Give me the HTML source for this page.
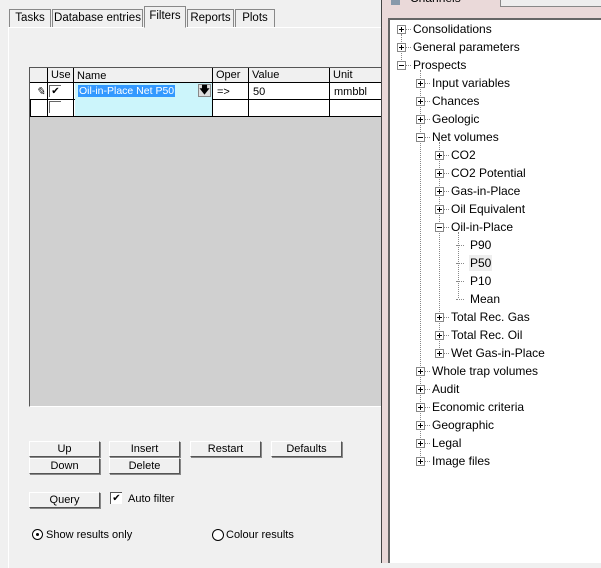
<!DOCTYPE html><html><head><style>
body{margin:0;width:601px;height:563px;overflow:hidden;background:#f0f0f0;font-family:"Liberation Sans",sans-serif;font-size:11px;color:#000;position:relative}
.a{position:absolute;white-space:nowrap}
.tab{position:absolute;top:9px;height:18px;border:1px solid #888;border-bottom:none;background:#f0f0f0;line-height:17px;font-size:11.5px;box-sizing:border-box;white-space:nowrap;overflow:hidden;text-align:center}
.btn{position:absolute;height:16px;border:1px solid;border-color:#fff #555 #555 #fff;background:#f0f0f0;text-align:center;line-height:15px;box-sizing:border-box;font-size:11px;box-shadow:1px 1px 0 #888}
.c{position:absolute;top:0;height:100%;border-right:1px solid #000;box-sizing:border-box;padding-left:3px}
.row{position:absolute;left:0;width:352px;border-bottom:1px solid #000;box-sizing:border-box}
.t{position:absolute;font-size:12px;line-height:16px;color:#000;white-space:nowrap}
.pb{position:absolute;width:9px;height:9px;border:1px solid #888;box-sizing:border-box;background:#fff}
.pb:before{content:"";position:absolute;left:1px;top:3px;width:5px;height:1px;background:#000}
.pb.p:after{content:"";position:absolute;left:3px;top:1px;width:1px;height:5px;background:#000}
.vl{position:absolute;border-left:1px dotted #888;width:0}
.hl{position:absolute;border-top:1px dotted #888;height:0}
</style></head><body>
<div class="a" style="left:8px;top:27px;width:380px;height:540px;border-left:1px solid #fff;border-top:1px solid #fff"></div>
<div class="tab" style="left:9px;width:42px">Tasks</div>
<div class="tab" style="left:52px;width:91px">Database entries</div>
<div class="tab" style="left:144px;top:6px;height:22px;width:42px;border-bottom:1px solid #f0f0f0;line-height:19px">Filters</div>
<div class="tab" style="left:187px;width:47px">Reports</div>
<div class="tab" style="left:235px;width:40px">Plots</div>
<div class="a" style="left:29px;top:67px;width:352px;height:338px;background:#d0d0d0;border-left:1px solid #555;border-top:1px solid #555;border-bottom:1px solid #fff"></div>
<div class="a" style="left:30px;top:68px;width:352px;height:48px;background:#fff">
 <div class="row" style="top:0;height:15px;background:#f0f0f0"></div>
 <div class="row" style="top:15px;height:17px"></div>
 <div class="row" style="top:32px;height:17px"></div>
 <div class="c" style="left:0;width:18px"></div>
 <div class="c" style="left:18px;width:26px;line-height:14px">Use</div>
 <div class="a" style="left:45px;top:15px;width:137px;height:33px;background:#ccf5fb"></div>
 <div class="c" style="left:44px;width:139px;line-height:16px">Name</div>
 <div class="c" style="left:183px;width:36px;line-height:14px">Oper</div>
 <div class="c" style="left:219px;width:81px;line-height:14px">Value</div>
 <div class="c" style="left:300px;width:52px;line-height:14px">Unit</div>
 <div class="a" style="left:48px;top:17px;width:96px;height:12px;background:#3399ff;color:#fff;line-height:12px;padding-left:1px;overflow:hidden;font-size:10.5px">Oil-in-Place Net P50</div>
 <div class="a" style="left:168px;top:16px;width:13px;height:13px;background:#ddd;border:1px solid #888;box-sizing:border-box;font-size:10px;line-height:11px;text-align:center;font-weight:bold">&#x1F847;</div>
 <div class="a" style="left:187px;top:18px;line-height:12px">=&gt;</div>
 <div class="a" style="left:223px;top:18px;line-height:12px">50</div>
 <div class="a" style="left:304px;top:18px;line-height:12px">mmbbl</div>
 <div class="a" style="left:6px;top:17px;font-size:11px;font-style:italic">&#x270E;</div>
 <div class="a" style="left:19px;top:17px;width:12px;height:12px;border-top:1px solid #666;border-left:1px solid #666;box-sizing:border-box;font-size:10px;line-height:11px;text-align:center">&#10004;</div>
 <div class="a" style="left:19px;top:33px;width:12px;height:12px;border-top:1px solid #666;border-left:1px solid #666;box-sizing:border-box"></div>
 <div class="a" style="left:0;top:32px;width:18px;height:17px;border:1px solid #000;box-sizing:border-box;border-top:none"></div>
</div>
<div class="btn" style="left:29px;top:441px;width:71px">Up</div>
<div class="btn" style="left:109px;top:441px;width:71px">Insert</div>
<div class="btn" style="left:190px;top:441px;width:71px">Restart</div>
<div class="btn" style="left:271px;top:441px;width:71px">Defaults</div>
<div class="btn" style="left:29px;top:458px;width:71px">Down</div>
<div class="btn" style="left:109px;top:458px;width:71px">Delete</div>
<div class="btn" style="left:29px;top:492px;width:71px">Query</div>
<div class="a" style="left:110px;top:492px;width:12px;height:12px;background:#fff;border-top:1px solid #555;border-left:1px solid #555;box-sizing:border-box;font-size:10px;line-height:11px;text-align:center">&#10004;</div>
<div class="a" style="left:128px;top:493px">Auto filter</div>
<div class="a" style="left:32px;top:529px;width:11px;height:11px;border-radius:50%;border:1px solid #000;background:#fff;box-sizing:border-box"><div class="a" style="left:3px;top:3px;width:3px;height:3px;background:#000;border-radius:50%"></div></div>
<div class="a" style="left:46px;top:529px">Show results only</div>
<div class="a" style="left:212px;top:529px;width:12px;height:12px;border-radius:50%;border:1px solid #000;background:#fff;box-sizing:border-box"></div>
<div class="a" style="left:226px;top:529px">Colour results</div>
<div class="a" style="left:381px;top:0;width:220px;height:563px;background:#ead9d9"></div>
<div class="a" style="left:381px;top:0;width:1px;height:563px;background:#444"></div>
<div class="a" style="left:388px;top:18px;width:2px;height:545px;background:#666"></div>
<div class="a" style="left:390px;top:18px;width:211px;height:2px;background:#666"></div>
<div class="a" style="left:390px;top:20px;width:211px;height:543px;background:#fff"></div>
<div class="a" style="left:391px;top:0;width:9px;height:5px;background:#8899aa"></div>
<div class="a" style="left:410px;top:-9px;font-size:12px">Channels</div>
<div class="a" style="left:500px;top:0;width:100px;height:6px;border:1px solid #888;border-top:none;background:#eee"></div>
<div class="vl" style="left:401px;top:34px;height:30px"></div>
<div class="vl" style="left:420px;top:70px;height:392px"></div>
<div class="vl" style="left:439px;top:142px;height:212px"></div>
<div class="vl" style="left:458px;top:232px;height:66px"></div>
<div id="tree"></div>
<script>
var items=[["Consolidations",0,"p"],["General parameters",0,"p"],["Prospects",0,"m"],["Input variables",1,"p"],["Chances",1,"p"],["Geologic",1,"p"],["Net volumes",1,"m"],["CO2",2,"p"],["CO2 Potential",2,"p"],["Gas-in-Place",2,"p"],["Oil Equivalent",2,"p"],["Oil-in-Place",2,"m"],["P90",3,""],["P50",3,""],["P10",3,""],["Mean",3,""],["Total Rec. Gas",2,"p"],["Total Rec. Oil",2,"p"],["Wet Gas-in-Place",2,"p"],["Whole trap volumes",1,"p"],["Audit",1,"p"],["Economic criteria",1,"p"],["Geographic",1,"p"],["Legal",1,"p"],["Image files",1,"p"]];
var h="";items.forEach(function(it,i){var y=21+i*18,x=397+it[1]*19;
if(it[2]){h+='<div class="pb '+(it[2]=="p"?"p":"")+'" style="left:'+x+'px;top:'+(y+4)+'px"></div><div class="hl" style="left:'+(x+9)+'px;top:'+(y+8)+'px;width:5px"></div>';}
else{h+='<div class="hl" style="left:'+(x+2)+'px;top:'+(y+8)+'px;width:8px"></div>';}
var bg=it[0]=="P50"?"background:#eee;":"";
h+='<div class="t" style="'+bg+'left:'+(x+15)+'px;top:'+y+'px;padding:0 1px">'+it[0]+'</div>';});
document.getElementById("tree").innerHTML=h;
</script>
</body></html>
